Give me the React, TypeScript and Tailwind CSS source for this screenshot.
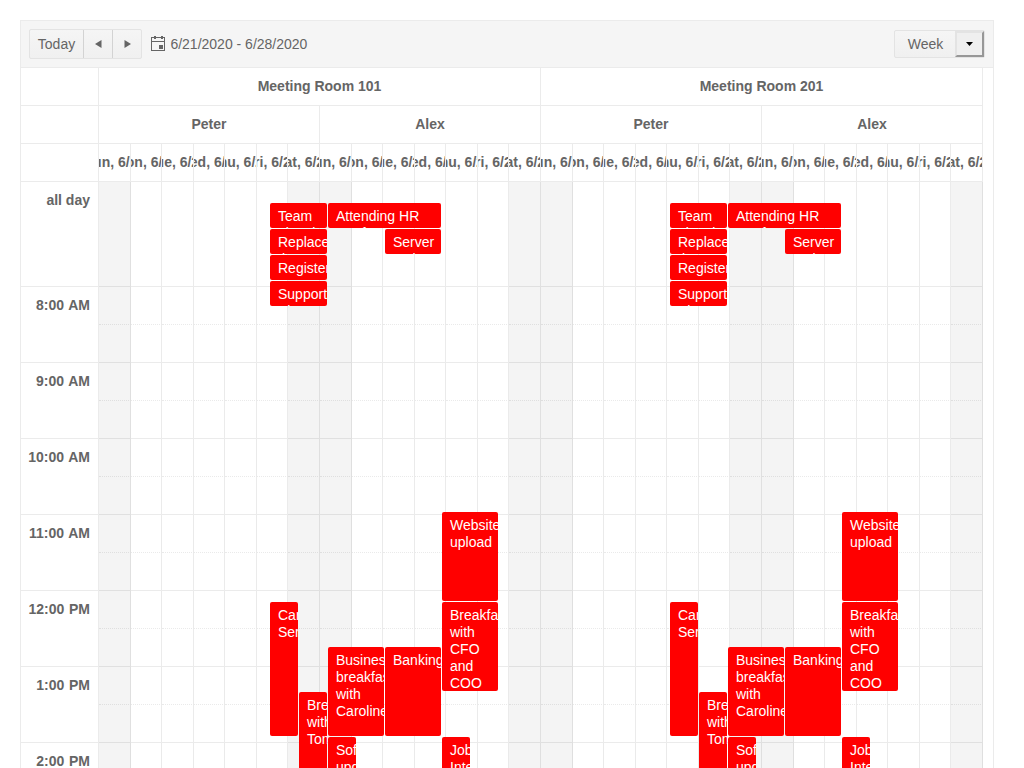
const days = ["Sun, 6/21", "Mon, 6/22", "Tue, 6/23", "Wed, 6/24", "Thu, 6/25", "Fri, 6/26", "Sat, 6/27"];
const columns = [0, 1, 2, 3].flatMap((group) => days.map((label, day) => ({ key: `${group}-${day}`, label, day })));
const rooms = ["Meeting Room 101", "Meeting Room 201"];
const people = ["Peter", "Alex", "Peter", "Alex"];
const hours = ["8:00 AM", "9:00 AM", "10:00 AM", "11:00 AM", "12:00 PM", "1:00 PM", "2:00 PM"];

type EventItem = { title: string; x: number; y: number; w: number; h: number };

// Positions are relative to the top left corner of the slot grid.
const events: EventItem[] = [
  { title: "Team planning", x: 171, y: 21, w: 57, h: 25 },
  { title: "Replace the printer", x: 171, y: 47, w: 57, h: 25 },
  { title: "Register new", x: 171, y: 73, w: 57, h: 25 },
  { title: "Support Phone", x: 171, y: 99, w: 57, h: 25 },
  { title: "Attending HR Conference", x: 229, y: 21, w: 113, h: 25 },
  { title: "Server maintenance", x: 286, y: 47, w: 56, h: 25 },
  { title: "Website upload", x: 343, y: 330, w: 56, h: 89 },
  { title: "Breakfast with CFO and COO", x: 343, y: 420, w: 56, h: 89 },
  { title: "Car Service", x: 171, y: 420, w: 28, h: 134 },
  { title: "Breakfast with Tom", x: 200, y: 510, w: 28, h: 134 },
  { title: "Business breakfast with Caroline", x: 229, y: 465, w: 56, h: 89 },
  { title: "Banking", x: 286, y: 465, w: 56, h: 89 },
  { title: "Software updates", x: 229, y: 555, w: 28, h: 89 },
  { title: "Job Interview", x: 343, y: 555, w: 28, h: 89 },
];

// Seven day columns share 221px: alternating 32px and 31px.
const dayWidth = (day: number) => (day % 2 === 0 ? "w-[32px]" : "w-[31px]");

function SlotRow({ className }: { className: string }) {
  return (
    <div className="flex">
      {columns.map((c) => (
        <div
          key={c.key}
          className={`shrink-0 border-r border-b border-black/8 ${dayWidth(c.day)} ${className} ${
            c.day === 0 || c.day === 6 ? "bg-[#f4f4f4]" : ""
          }`}
        />
      ))}
    </div>
  );
}

function CalendarIcon() {
  return (
    <svg width="16" height="16" viewBox="0 0 16 16" fill="#656565" shapeRendering="crispEdges">
      <path d="M1 1h14v14H1zM2 2v3h12V2zM2 6v8h12V6z" fillRule="evenodd" />
      <path d="M4 0h2v1H4zM11 0h2v1h-2zM4 2h2v1H4zM11 2h2v1h-2zM9 9h4v4H9z" />
    </svg>
  );
}

function Toolbar() {
  return (
    <div className="flex h-[47px] items-center border-b border-[#ebebeb] bg-[#f5f5f5] px-2">
      <div className="flex h-[30px] w-[113px] rounded-xs border border-[#e3e3e3] bg-linear-to-b from-[#f5f5f5] to-[#f0f0f0]">
        <button className="w-[54px] border-r border-[#d3d3d3] leading-[28px]">Today</button>
        <button className="flex w-[29px] items-center justify-center border-r border-[#d3d3d3]">
          <svg width="7" height="8" viewBox="0 0 7 8" fill="#656565"><path d="M6.500 0v8L0 4z" /></svg>
        </button>
        <button className="flex w-7 items-center justify-center">
          <svg width="7" height="8" viewBox="0 0 7 8" fill="#656565"><path d="M.5 0v8L7 4z" /></svg>
        </button>
      </div>
      <div className="ml-2 flex items-center gap-[4.4px]">
        <CalendarIcon />
        <span>6/21/2020 - 6/28/2020</span>
      </div>
      <div className="ml-auto flex h-7 w-[91px] items-center rounded-xs border border-[#e3e3e3] bg-linear-to-b from-[#f5f5f5] to-[#f0f0f0]">
        <span className="w-[60px] shrink-0 pl-px text-center">Week</span>
        <button className="flex h-[26px] w-[29px] shrink-0 items-center justify-center border-2 border-t-[#e3e3e3] border-r-[#979797] border-b-[#979797] border-l-[#e3e3e3] bg-[#efefef]">
          <svg width="7" height="4" viewBox="0 0 7 4" fill="#000"><path d="M0 0h7L3.500 4z" /></svg>
        </button>
      </div>
    </div>
  );
}

export default function App() {
  return (
    <div className="h-[768px] overflow-hidden bg-white p-5 pr-[30px] font-['Liberation_Sans',Arial,sans-serif] text-sm leading-[17px] text-[#656565]">
      <div className="h-[800px] border border-[#ebebeb]">
        <Toolbar />
        <div className="flex">
          <div className="w-[78px] shrink-0 border-r border-black/8 font-bold">
            <div className="h-[38px] border-b border-black/8" />
            <div className="h-[38px] border-b border-black/8" />
            <div className="h-[38px] border-b border-black/8" />
            <div className="h-[105px] border-b border-black/8 pt-[10px] pr-2 text-right">all day</div>
            {hours.map((h) => (
              <div key={h} className="h-[76px] border-b border-black/8 pt-[10px] pr-2 text-right [word-spacing:0.77px]">{h}</div>
            ))}
          </div>
          <div className="w-[884px] shrink-0">
            <div className="flex font-bold">
              {rooms.map((r) => (
                <div key={r} className="h-[38px] flex-1 border-r border-b border-black/8 pt-[10px] text-center">{r}</div>
              ))}
            </div>
            <div className="flex font-bold">
              {people.map((p, i) => (
                <div key={i} className="h-[38px] flex-1 border-r border-b border-black/8 pt-[10px] text-center">{p}</div>
              ))}
            </div>
            <div className="flex font-bold">
              {columns.map((c) => (
                <div key={c.key} className={`flex h-[38px] shrink-0 justify-center overflow-hidden border-r border-b border-black/8 pt-[10px] whitespace-nowrap ${dayWidth(c.day)}`}>
                  <span className="shrink-0">{c.label}</span>
                </div>
              ))}
            </div>
            <div className="relative">
              <SlotRow className="h-[105px]" />
              {hours.map((h) => (
                <div key={h}>
                  <SlotRow className="h-[38px] [border-bottom-style:dotted]" />
                  <SlotRow className="h-[38px]" />
                </div>
              ))}
              {[0, 400].map((offset) =>
                events.map((e) => (
                  <div
                    key={`${offset}-${e.title}`}
                    className="absolute overflow-hidden rounded-xs bg-[#ff0000] px-2 pt-[5px] text-white"
                    style={{ left: e.x + offset, top: e.y, width: e.w, height: e.h }}
                  >
                    {e.title}
                  </div>
                )),
              )}
            </div>
          </div>
        </div>
      </div>
    </div>
  );
}
